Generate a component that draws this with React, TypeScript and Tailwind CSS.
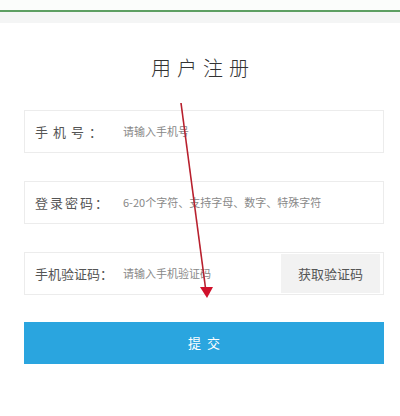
export default function App() {
  const font = { fontFamily: '"Noto Sans CJK SC", "Liberation Sans", sans-serif' }

  return (
    <div className="relative w-[400px] h-[416px] bg-white overflow-hidden" style={font}>
      {/* top strip */}
      <div className="h-[10px] bg-[#fbfdfb]" />
      <div className="h-[2px] bg-[#5d9f62]" />
      <div className="h-[11px] bg-[#f4f5f5]" />

      <h1 className="mt-[32px] text-center text-[20px] leading-[26px] tracking-[6px] pl-[6px] text-[#333] font-light">
        用户注册
      </h1>

      <div className="mt-[29px] ml-[24px] mr-[16px] flex flex-col gap-[28px]">
        <div className="h-[43px] border border-[#ececec] flex items-center pl-[10px]">
          <span className="w-[88px] text-[13px] tracking-[5px] text-[#555]">手机号：</span>
          <span className="text-[11px] text-[#888]">请输入手机号</span>
        </div>

        <div className="h-[43px] border border-[#ececec] flex items-center pl-[10px]">
          <span className="w-[88px] text-[13px] tracking-[2px] text-[#555]">登录密码：</span>
          <span className="text-[11px] text-[#888]">6-20个字符、支持字母、数字、特殊字符</span>
        </div>

        <div className="h-[43px] border border-[#ececec] flex items-center pl-[10px] pr-[3px]">
          <span className="w-[88px] text-[13px] text-[#555]">手机验证码：</span>
          <span className="flex-1 text-[11px] text-[#888]">请输入手机验证码</span>
          <div className="w-[99px] h-[39px] bg-[#f2f2f2] flex items-center justify-center text-[13px] text-[#555]">
            获取验证码
          </div>
        </div>

        <div className="-mt-[1px] h-[42px] bg-[#2aa5df] flex items-center justify-center text-[13px] tracking-[6px] pl-[6px] text-white">
          提交
        </div>
      </div>

      {/* red annotation arrow */}
      <svg className="absolute left-0 top-0" width="400" height="416" viewBox="0 0 400 416">
        <line x1="181" y1="103" x2="205.5" y2="288" stroke="#b8202e" strokeWidth="1.6" />
        <polygon points="200,287 213,287 207,298" fill="#d0112b" />
      </svg>
    </div>
  )
}
